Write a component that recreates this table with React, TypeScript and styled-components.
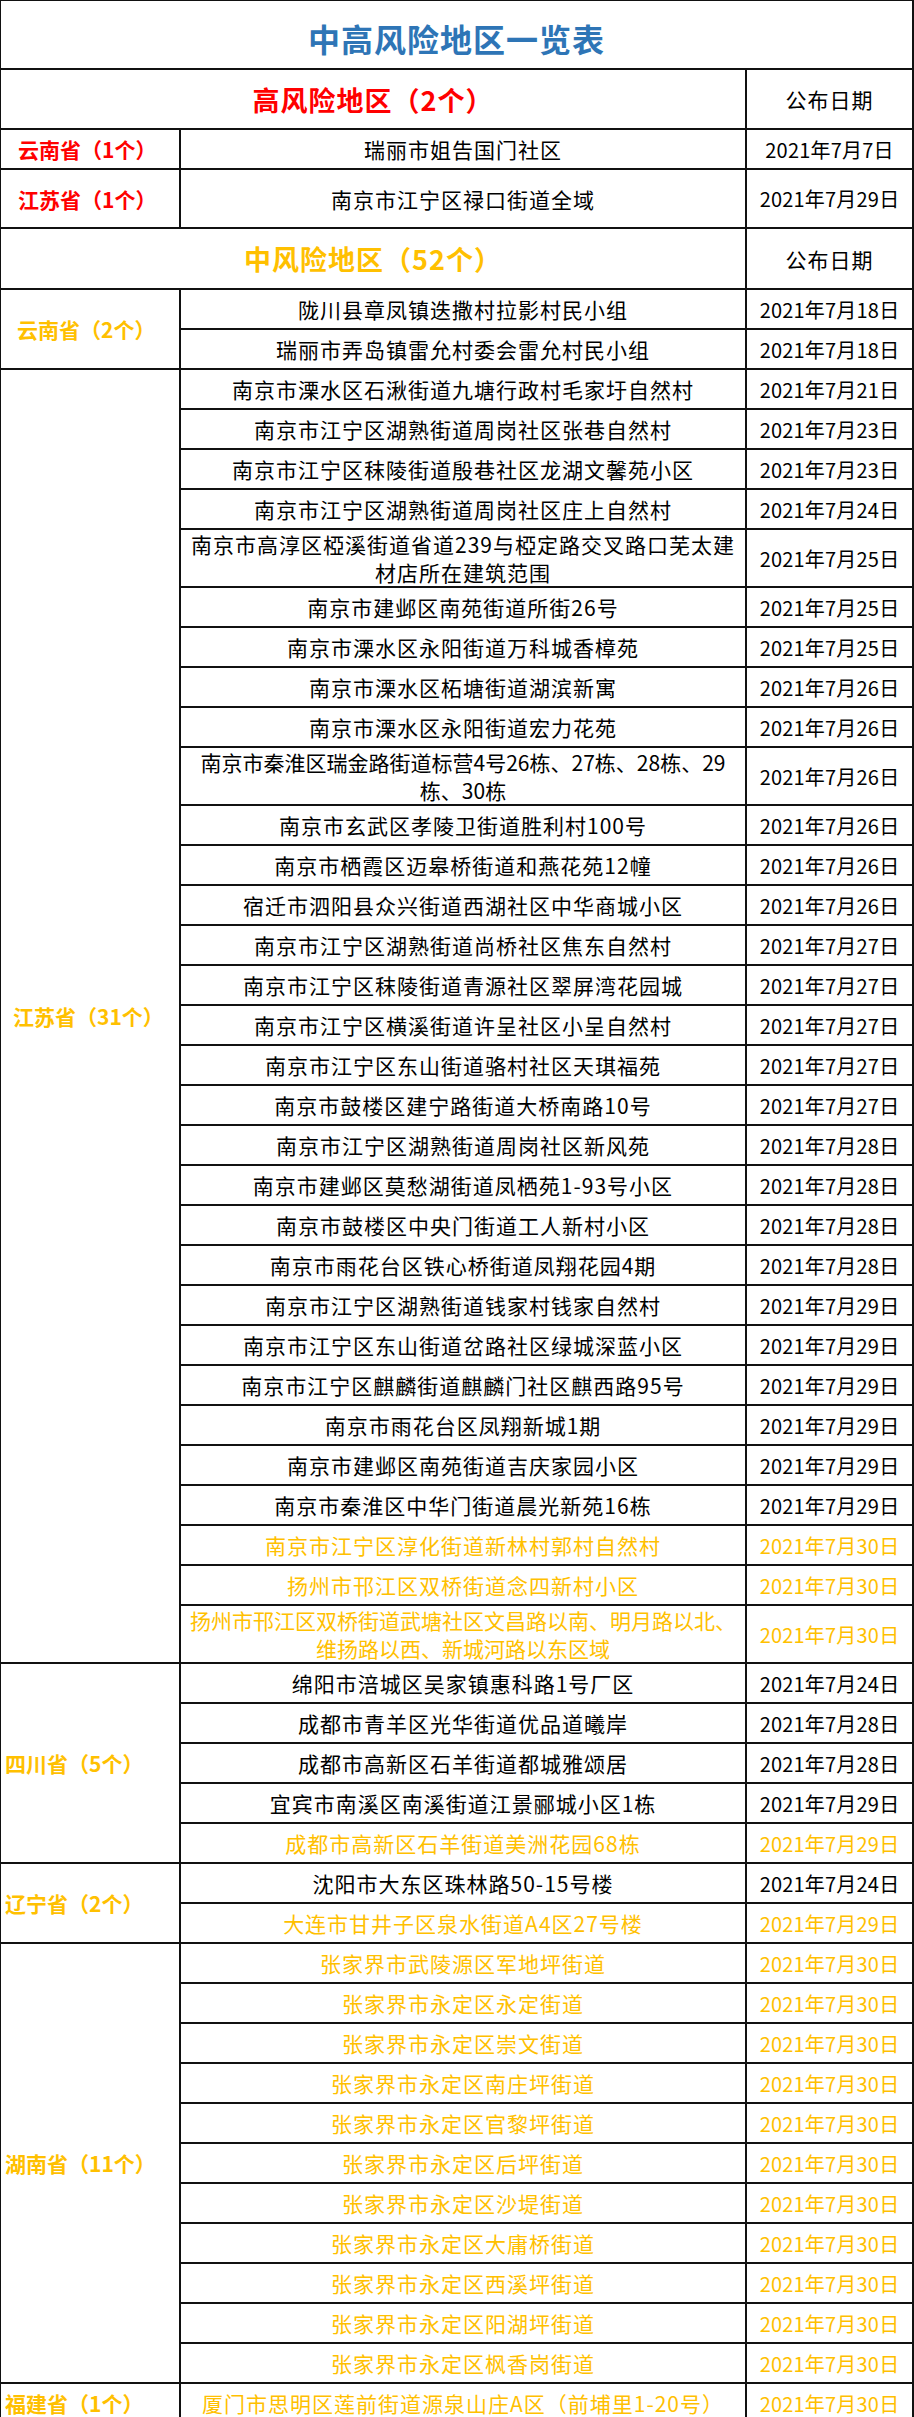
import styled, { createGlobalStyle } from 'styled-components';

type Tone = 'ink' | 'red' | 'gold' | 'blue';

const tones: Record<Tone, string> = {
  ink: '#000000',
  red: '#ff0000',
  gold: '#ffc000',
  blue: '#2e75b6',
};

interface Entry {
  place: string;
  date: string;
  tone?: Tone;
  height?: number;
  tight?: boolean;
}

interface Group {
  province: string;
  tone: Tone;
  indent: number;
  rows: Entry[];
}

const highGroups: Group[] = [
  {
    province: '云南省（1个）',
    tone: 'red',
    indent: 17,
    rows: [{ place: '瑞丽市姐告国门社区', date: '2021年7月7日' }],
  },
  {
    province: '江苏省（1个）',
    tone: 'red',
    indent: 17,
    rows: [{ place: '南京市江宁区禄口街道全域', date: '2021年7月29日', height: 59 }],
  },
];

const zjj = (street: string): Entry => ({
  place: `张家界市${street}`,
  date: '2021年7月30日',
  tone: 'gold',
});

const midGroups: Group[] = [
  {
    province: '云南省（2个）',
    tone: 'gold',
    indent: 16,
    rows: [
      { place: '陇川县章凤镇迭撒村拉影村民小组', date: '2021年7月18日' },
      { place: '瑞丽市弄岛镇雷允村委会雷允村民小组', date: '2021年7月18日' },
    ],
  },
  {
    province: '江苏省（31个）',
    tone: 'gold',
    indent: 12,
    rows: [
      { place: '南京市溧水区石湫街道九塘行政村毛家圩自然村', date: '2021年7月21日' },
      { place: '南京市江宁区湖熟街道周岗社区张巷自然村', date: '2021年7月23日' },
      { place: '南京市江宁区秣陵街道殷巷社区龙湖文馨苑小区', date: '2021年7月23日' },
      { place: '南京市江宁区湖熟街道周岗社区庄上自然村', date: '2021年7月24日' },
      {
        place: '南京市高淳区椏溪街道省道239与椏定路交叉路口芜太建\n材店所在建筑范围',
        date: '2021年7月25日',
        height: 56,
      },
      { place: '南京市建邺区南苑街道所街26号', date: '2021年7月25日' },
      { place: '南京市溧水区永阳街道万科城香樟苑', date: '2021年7月25日' },
      { place: '南京市溧水区柘塘街道湖滨新寓', date: '2021年7月26日' },
      { place: '南京市溧水区永阳街道宏力花苑', date: '2021年7月26日' },
      {
        place: '南京市秦淮区瑞金路街道标营4号26栋、27栋、28栋、29\n栋、30栋',
        date: '2021年7月26日',
        height: 55,
        tight: true,
      },
      { place: '南京市玄武区孝陵卫街道胜利村100号', date: '2021年7月26日' },
      { place: '南京市栖霞区迈皋桥街道和燕花苑12幢', date: '2021年7月26日' },
      { place: '宿迁市泗阳县众兴街道西湖社区中华商城小区', date: '2021年7月26日' },
      { place: '南京市江宁区湖熟街道尚桥社区焦东自然村', date: '2021年7月27日' },
      { place: '南京市江宁区秣陵街道青源社区翠屏湾花园城', date: '2021年7月27日' },
      { place: '南京市江宁区横溪街道许呈社区小呈自然村', date: '2021年7月27日' },
      { place: '南京市江宁区东山街道骆村社区天琪福苑', date: '2021年7月27日' },
      { place: '南京市鼓楼区建宁路街道大桥南路10号', date: '2021年7月27日' },
      { place: '南京市江宁区湖熟街道周岗社区新风苑', date: '2021年7月28日' },
      { place: '南京市建邺区莫愁湖街道凤栖苑1-93号小区', date: '2021年7月28日' },
      { place: '南京市鼓楼区中央门街道工人新村小区', date: '2021年7月28日' },
      { place: '南京市雨花台区铁心桥街道凤翔花园4期', date: '2021年7月28日' },
      { place: '南京市江宁区湖熟街道钱家村钱家自然村', date: '2021年7月29日' },
      { place: '南京市江宁区东山街道岔路社区绿城深蓝小区', date: '2021年7月29日' },
      { place: '南京市江宁区麒麟街道麒麟门社区麒西路95号', date: '2021年7月29日' },
      { place: '南京市雨花台区凤翔新城1期', date: '2021年7月29日' },
      { place: '南京市建邺区南苑街道吉庆家园小区', date: '2021年7月29日' },
      { place: '南京市秦淮区中华门街道晨光新苑16栋', date: '2021年7月29日' },
      { place: '南京市江宁区淳化街道新林村郭村自然村', date: '2021年7月30日', tone: 'gold' },
      { place: '扬州市邗江区双桥街道念四新村小区', date: '2021年7月30日', tone: 'gold' },
      {
        place: '扬州市邗江区双桥街道武塘社区文昌路以南、明月路以北、\n维扬路以西、新城河路以东区域',
        date: '2021年7月30日',
        tone: 'gold',
        height: 55,
        tight: true,
      },
    ],
  },
  {
    province: '四川省（5个）',
    tone: 'gold',
    indent: 4,
    rows: [
      { place: '绵阳市涪城区吴家镇惠科路1号厂区', date: '2021年7月24日' },
      { place: '成都市青羊区光华街道优品道曦岸', date: '2021年7月28日' },
      { place: '成都市高新区石羊街道都城雅颂居', date: '2021年7月28日' },
      { place: '宜宾市南溪区南溪街道江景郦城小区1栋', date: '2021年7月29日' },
      { place: '成都市高新区石羊街道美洲花园68栋', date: '2021年7月29日', tone: 'gold' },
    ],
  },
  {
    province: '辽宁省（2个）',
    tone: 'gold',
    indent: 4,
    rows: [
      { place: '沈阳市大东区珠林路50-15号楼', date: '2021年7月24日' },
      { place: '大连市甘井子区泉水街道A4区27号楼', date: '2021年7月29日', tone: 'gold' },
    ],
  },
  {
    province: '湖南省（11个）',
    tone: 'gold',
    indent: 4,
    rows: [
      zjj('武陵源区军地坪街道'),
      zjj('永定区永定街道'),
      zjj('永定区崇文街道'),
      zjj('永定区南庄坪街道'),
      zjj('永定区官黎坪街道'),
      zjj('永定区后坪街道'),
      zjj('永定区沙堤街道'),
      zjj('永定区大庸桥街道'),
      zjj('永定区西溪坪街道'),
      zjj('永定区阳湖坪街道'),
      zjj('永定区枫香岗街道'),
    ],
  },
  {
    province: '福建省（1个）',
    tone: 'gold',
    indent: 4,
    rows: [
      {
        place: '厦门市思明区莲前街道源泉山庄A区（前埔里1-20号）',
        date: '2021年7月30日',
        tone: 'gold',
      },
    ],
  },
];

const GlobalStyle = createGlobalStyle`
  html, body {
    margin: 0;
    padding: 0;
    background: #ffffff;
    overflow: hidden;
  }
`;

const Sheet = styled.div`
  display: grid;
  grid-template-columns: 180px 566px 167px;
  width: 914px;
  box-sizing: border-box;
  border-top: 1px solid #111;
  border-left: 1px solid #111;
  background: #ffffff;
  font-family: "Noto Sans CJK SC", "Noto Sans", sans-serif;
  color: #000;
`;

const Cell = styled.div<{ $height?: number }>`
  box-sizing: border-box;
  min-height: ${(p) => p.$height ?? 40}px;
  border-right: 2px solid #111;
  border-bottom: 2px solid #111;
  display: flex;
  align-items: center;
  justify-content: center;
  text-align: center;
`;

const TitleCell = styled(Cell)`
  grid-column: 1 / -1;
  padding-top: 6px;
  font-size: 32px;
  font-weight: 700;
  letter-spacing: 1px;
  color: ${tones.blue};
`;

const SectionCell = styled(Cell)<{ $tone: Tone }>`
  grid-column: 1 / 3;
  font-size: 27px;
  font-weight: 700;
  letter-spacing: 1px;
  color: ${(p) => tones[p.$tone]};
`;

const DateHeadCell = styled(Cell)`
  grid-column: 3;
  font-size: 21px;
  letter-spacing: 1px;
`;

const ProvinceCell = styled(Cell)<{ $tone: Tone; $span: number; $indent: number }>`
  grid-column: 1;
  grid-row: span ${(p) => p.$span};
  justify-content: flex-start;
  padding-left: ${(p) => p.$indent}px;
  font-size: 21px;
  font-weight: 700;
  color: ${(p) => tones[p.$tone]};
  white-space: nowrap;
`;

const PlaceCell = styled(Cell)<{ $tone: Tone; $tight?: boolean }>`
  grid-column: 2;
  font-size: 21px;
  line-height: 28px;
  letter-spacing: ${(p) => (p.$tight ? '0px' : '1px')};
  white-space: pre;
  color: ${(p) => tones[p.$tone]};
`;

const DateCell = styled(Cell)<{ $tone: Tone }>`
  grid-column: 3;
  font-size: 20px;
  letter-spacing: 0.2px;
  white-space: nowrap;
  color: ${(p) => tones[p.$tone]};
`;

const RowCells = ({ row }: { row: Entry }) => {
  const tone = row.tone ?? 'ink';
  return (
    <>
      <PlaceCell $height={row.height} $tone={tone} $tight={row.tight}>
        {row.place}
      </PlaceCell>
      <DateCell $height={row.height} $tone={tone}>
        {row.date}
      </DateCell>
    </>
  );
};

const GroupRows = ({ group }: { group: Group }) => (
  <>
    <ProvinceCell $tone={group.tone} $span={group.rows.length} $indent={group.indent}>
      {group.province}
    </ProvinceCell>
    {group.rows.map((row, i) => (
      <RowCells key={i} row={row} />
    ))}
  </>
);

export default function App() {
  return (
    <>
      <GlobalStyle />
      <Sheet>
        <TitleCell $height={69}>中高风险地区一览表</TitleCell>

        <SectionCell $height={60} $tone="red">
          高风险地区（2个）
        </SectionCell>
        <DateHeadCell $height={60}>公布日期</DateHeadCell>
        {highGroups.map((g) => (
          <GroupRows key={g.province} group={g} />
        ))}

        <SectionCell $height={61} $tone="gold">
          中风险地区（52个）
        </SectionCell>
        <DateHeadCell $height={61}>公布日期</DateHeadCell>
        {midGroups.map((g) => (
          <GroupRows key={g.province} group={g} />
        ))}
      </Sheet>
    </>
  );
}
